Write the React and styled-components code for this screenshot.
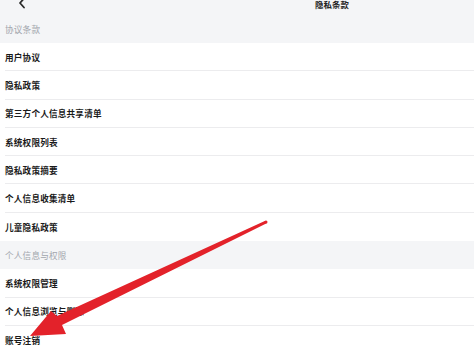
import React from 'react';
import styled, { createGlobalStyle } from 'styled-components';

const GlobalStyle = createGlobalStyle`
  html, body {
    margin: 0;
    padding: 0;
    background: #ffffff;
    overflow: hidden;
  }
  body {
    font-family: "Noto Sans CJK SC", "Noto Sans", sans-serif;
  }
`;

const Page = styled.div`
  position: relative;
  width: 474px;
  height: 349px;
  overflow: hidden;
  background: #ffffff;
`;

const NavBar = styled.div`
  height: 22px;
  margin-top: -7px;
  background: #f4f5f7;
  display: grid;
  grid-template-columns: 40px 1fr;
  align-items: center;
  position: relative;
`;

const Back = styled.svg`
  margin-left: 18px;
  margin-top: -3px;
  display: block;
`;

const Title = styled.span`
  justify-self: start;
  padding-left: 275px;
  font-size: 8.4px;
  line-height: 9px;
  font-weight: 700;
  color: #222;
  letter-spacing: 0.1px;
`;

const SectionHeader = styled.div`
  height: 28.3px;
  background: #f4f5f7;
  display: flex;
  align-items: center;
  padding-left: 5px;
  font-size: 8.6px;
  color: #a2a6ad;
  letter-spacing: 0.2px;
`;

const FirstSection = styled(SectionHeader)`
  height: 28px;
`;

const Row = styled.div`
  height: 28.3px;
  box-sizing: border-box;
  margin-left: 5px;
  display: flex;
  align-items: center;
  font-size: 8.6px;
  font-weight: 700;
  color: #1a1a1a;
  letter-spacing: 0.2px;
  border-bottom: ${(p) => (p.last ? 'none' : '1px solid #ececee')};
`;

const ArrowLayer = styled.svg`
  position: absolute;
  left: 0;
  top: 0;
  pointer-events: none;
`;

const agreements = ['用户协议', '隐私政策', '第三方个人信息共享清单', '系统权限列表', '隐私政策摘要', '个人信息收集清单', '儿童隐私政策'];
const rights = ['系统权限管理', '个人信息浏览与删除', '账号注销'];

export default function App() {
  return (
    <Page>
      <GlobalStyle />
      <NavBar>
        <Back width="8" height="12" viewBox="0 0 8 12">
          <path d="M6 1.5 L2 6 L6 10.5" fill="none" stroke="#2a2a2a" strokeWidth="1.8" strokeLinecap="round" strokeLinejoin="round" />
        </Back>
        <Title>隐私条款</Title>
      </NavBar>
      <FirstSection>协议条款</FirstSection>
      {agreements.map((t, i) => (
        <Row key={t} last={i === agreements.length - 1}>{t}</Row>
      ))}
      <SectionHeader>个人信息与权限</SectionHeader>
      {rights.map((t, i) => (
        <Row key={t} last={i === rights.length - 1}>{t}</Row>
      ))}
      <ArrowLayer width="474" height="349" viewBox="0 0 474 349">
        <polygon
          points="266.7,223.3 265.3,220.7 57,316 51,311 30,336 66,334 62,325"
          fill="#e3222a"
          strokeLinejoin="round"
        />
        <circle cx="266" cy="222" r="1.5" fill="#e3222a" />
      </ArrowLayer>
    </Page>
  );
}
